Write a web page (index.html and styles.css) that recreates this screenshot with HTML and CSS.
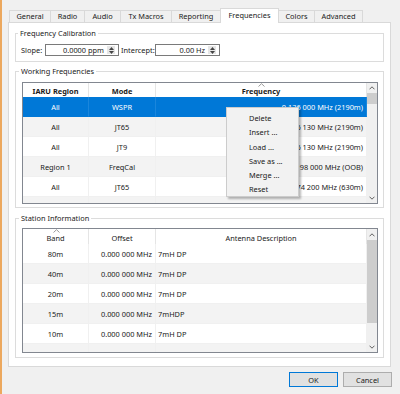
FILE: index.html
```html
<!DOCTYPE html>
<html>
<head>
<meta charset="utf-8">
<link rel="stylesheet" href="styles.css">
</head>
<body>
<div class="window">
  <div class="tabs">
    <div class="tab t-general">General</div>
    <div class="tab t-radio">Radio</div>
    <div class="tab t-audio">Audio</div>
    <div class="tab t-tx">Tx Macros</div>
    <div class="tab t-rep">Reporting</div>
    <div class="tab t-freq active">Frequencies</div>
    <div class="tab t-colors">Colors</div>
    <div class="tab t-adv">Advanced</div>
  </div>
  <div class="pane">
    <fieldset class="group calib">
      <legend>Frequency Calibration</legend>
      <div class="calib-row">
        <span class="lbl lbl-slope">Slope:</span>
        <div class="spin spin-slope">
          <span class="val">0.0000 ppm</span>
          <span class="spin-btns">
            <svg width="5" height="3" viewBox="0 0 5 3"><path d="M0 3L2.5 0L5 3Z" fill="#444"/></svg>
            <svg width="5" height="3" viewBox="0 0 5 3"><path d="M0 0L2.5 3L5 0Z" fill="#444"/></svg>
          </span>
        </div>
        <span class="lbl lbl-int">Intercept:</span>
        <div class="spin spin-int">
          <span class="val">0.00 Hz</span>
          <span class="spin-btns">
            <svg width="5" height="3" viewBox="0 0 5 3"><path d="M0 3L2.5 0L5 3Z" fill="#444"/></svg>
            <svg width="5" height="3" viewBox="0 0 5 3"><path d="M0 0L2.5 3L5 0Z" fill="#444"/></svg>
          </span>
        </div>
      </div>
    </fieldset>

    <fieldset class="group work">
      <legend>Working Frequencies</legend>
      <div class="table work-table">
        <div class="grid work-grid">
          <div class="row head bold">
            <div class="c center">IARU Region</div>
            <div class="c center">Mode</div>
            <div class="c center sorted"><svg class="sort" width="7" height="4" viewBox="0 0 7 4"><path d="M0.5 3.5L3.5 0.7L6.5 3.5" fill="none" stroke="#9a9a9a" stroke-width="1"/></svg>Frequency</div>
          </div>
          <div class="row sel">
            <div class="c center">All</div>
            <div class="c center">WSPR</div>
            <div class="c right">0.136 000 MHz (2190m)</div>
          </div>
          <div class="row alt">
            <div class="c center">All</div>
            <div class="c center">JT65</div>
            <div class="c right">0.136 130 MHz (2190m)</div>
          </div>
          <div class="row">
            <div class="c center">All</div>
            <div class="c center">JT9</div>
            <div class="c right">0.136 130 MHz (2190m)</div>
          </div>
          <div class="row alt">
            <div class="c center">Region 1</div>
            <div class="c center">FreqCal</div>
            <div class="c right">0.198 000 MHz (OOB)</div>
          </div>
          <div class="row">
            <div class="c center">All</div>
            <div class="c center">JT65</div>
            <div class="c right">0.474 200 MHz (630m)</div>
          </div>
          <div class="row alt">
            <div class="c center"></div>
            <div class="c center"></div>
            <div class="c right"></div>
          </div>
        </div>
        <div class="vscroll work-scroll">
          <div class="sb-btn"><svg width="6" height="4" viewBox="0 0 6 4"><path d="M0.5 3.3L3 0.8L5.5 3.3" fill="none" stroke="#606060" stroke-width="1"/></svg></div>
          <div class="thumb"></div>
          <div class="track"></div>
          <div class="sb-btn"><svg width="6" height="4" viewBox="0 0 6 4"><path d="M0.5 0.7L3 3.2L5.5 0.7" fill="none" stroke="#606060" stroke-width="1"/></svg></div>
        </div>
        <div class="menu">
          <div class="mi">Delete</div>
          <div class="mi">Insert ...</div>
          <div class="mi">Load ...</div>
          <div class="mi">Save as ...</div>
          <div class="mi">Merge ...</div>
          <div class="mi">Reset</div>
        </div>
      </div>
    </fieldset>

    <fieldset class="group station">
      <legend>Station Information</legend>
      <div class="table station-table">
        <div class="grid station-grid">
          <div class="row head">
            <div class="c center sorted"><svg class="sort" width="7" height="4" viewBox="0 0 7 4"><path d="M0.5 3.5L3.5 0.7L6.5 3.5" fill="none" stroke="#9a9a9a" stroke-width="1"/></svg>Band</div>
            <div class="c center">Offset</div>
            <div class="c center">Antenna Description</div>
          </div>
          <div class="row">
            <div class="c center">80m</div>
            <div class="c right">0.000 000 MHz</div>
            <div class="c left">7mH DP</div>
          </div>
          <div class="row alt">
            <div class="c center">40m</div>
            <div class="c right">0.000 000 MHz</div>
            <div class="c left">7mH DP</div>
          </div>
          <div class="row">
            <div class="c center">20m</div>
            <div class="c right">0.000 000 MHz</div>
            <div class="c left">7mH DP</div>
          </div>
          <div class="row alt">
            <div class="c center">15m</div>
            <div class="c right">0.000 000 MHz</div>
            <div class="c left">7mHDP</div>
          </div>
          <div class="row">
            <div class="c center">10m</div>
            <div class="c right">0.000 000 MHz</div>
            <div class="c left">7mH DP</div>
          </div>
          <div class="row alt">
            <div class="c center"></div>
            <div class="c right"></div>
            <div class="c left"></div>
          </div>
        </div>
        <div class="vscroll station-scroll">
          <div class="sb-btn"><svg width="6" height="4" viewBox="0 0 6 4"><path d="M0.5 3.3L3 0.8L5.5 3.3" fill="none" stroke="#606060" stroke-width="1"/></svg></div>
          <div class="thumb"></div>
          <div class="track"></div>
          <div class="sb-btn"><svg width="6" height="4" viewBox="0 0 6 4"><path d="M0.5 0.7L3 3.2L5.5 0.7" fill="none" stroke="#606060" stroke-width="1"/></svg></div>
        </div>
      </div>
    </fieldset>
  </div>
  <div class="buttons">
    <button class="btn ok">OK</button>
    <button class="btn">Cancel</button>
  </div>
</div>
</body>
</html>
```

FILE: styles.css
```css
* { box-sizing: border-box; }
html, body { margin: 0; padding: 0; }
body {
  background: #f0f0f0;
  font-family: "Noto Sans", "Liberation Sans", sans-serif;
  font-size: 7.4px;
  color: #1a1a1a;
  width: 400px;
  height: 394px;
  overflow: hidden;
}
.window {
  height: 394px;
  border-left: 2px solid #eca85e;
  padding: 10px 9px 0 6px;
  display: flex;
  flex-direction: column;
}

/* tabs */
.tabs {
  display: flex;
  align-items: flex-end;
  height: 12px;
  margin-left: 1px;
  position: relative;
  z-index: 1;
}
.tab {
  height: 12px;
  line-height: 11px;
  text-align: center;
  border: 1px solid #d9d9d9;
  border-right: none;
  border-bottom: none;
  background: #f0f0f0;
  white-space: nowrap;
}
.tab.t-adv { border-right: 1px solid #d9d9d9; }
.tab.active {
  height: 15px;
  margin-bottom: -1px;
  background: #fff;
  border-right: 1px solid #d9d9d9;
  line-height: 12px;
  padding-bottom: 2px;
}
.tab.active + .tab { border-left: none; }
.t-general { width: 41px; }
.t-radio { width: 34px; }
.t-audio { width: 36px; }
.t-tx { width: 51px; }
.t-rep { width: 49px; }
.t-freq { width: 59px; }
.t-colors { width: 35px; }
.t-adv { width: 49px; }

/* pane */
.pane {
  height: 345px;
  border: 1px solid #d9d9d9;
  background: #fff;
  padding: 4px 6px 0 6px;
}
.group {
  margin: 0;
  min-width: 0;
  border: 1px solid #dcdcdc;
}
.group legend {
  padding: 0 2px;
  margin-left: -3px;
  line-height: 12px;
  font-size: 7.4px;
}
.calib { padding: 5px 4px 5px 5px; }
.work { margin-top: 3px; padding: 5px 4px 3px 6px; }
.station { margin-top: 4px; padding: 4px 4px 4px 6px; }

/* calibration row */
.calib-row {
  display: flex;
  align-items: center;
  height: 12px;
}
.lbl-slope { width: 24px; }
.lbl-int { width: 34px; margin-left: 2px; }
.spin {
  height: 12px;
  border: 1px solid #7a7a7a;
  display: flex;
  align-items: center;
  justify-content: flex-end;
}
.spin-slope { width: 74px; }
.spin-int { width: 65px; }
.spin .val { padding-right: 3px; }
.spin-btns {
  width: 8px;
  height: 8px;
  margin-right: 3px;
  background: #e6e6e6;
  display: flex;
  flex-direction: column;
  align-items: center;
  justify-content: space-around;
}
.spin-btns svg { display: block; }

/* tables */
.table {
  width: 356px;
  border: 1px solid #828790;
  display: flex;
  position: relative;
  overflow: hidden;
  background: #fff;
}
.work-table { height: 122px; }
.station-table { height: 125px; }
.grid {
  flex: 1;
  display: grid;
  grid-template-columns: 66px 67px 1fr;
  grid-auto-rows: 20px;
  align-content: start;
}
.work-grid { grid-template-rows: 14px; }
.station-grid { grid-template-rows: 15px; }
.row { display: contents; }
.c {
  display: flex;
  align-items: center;
  padding: 0 3px;
  white-space: nowrap;
  overflow: hidden;
  border-right: 1px solid #f0f0f0;
  border-bottom: 1px solid #f0f0f0;
}
.c.center { justify-content: center; }
.c.right { justify-content: flex-end; }
.c.left { justify-content: flex-start; padding-left: 2px; }
.row.head .c {
  border-bottom: none;
  border-right: 1px solid #e5e5e5;
  background: #fff;
  padding-top: 1px;
}
.row.head.bold .c { font-weight: bold; }
.station-grid .row.head .c { padding-top: 2px; }
.row.alt .c { background: #f3f3f3; }
.row.sel .c { background: #0078d7; color: #fff; border-color: #0078d7; border-right-color: #1a86dc; }
.sorted { position: relative; }
.sort {
  position: absolute;
  left: 50%;
  top: 0;
  margin-left: -3px;
}

/* scrollbars */
.vscroll {
  width: 10px;
  background: #f0f0f0;
  display: flex;
  flex-direction: column;
}
.sb-btn {
  height: 10px;
  display: flex;
  align-items: center;
  justify-content: center;
}
.sb-btn svg { display: block; }
.thumb { background: #cdcdcd; }
.track { flex: 1; }
.work-scroll .thumb { height: 11px; }
.station-scroll .sb-btn:first-child { height: 11px; }
.station-scroll .thumb { height: 83px; }

/* context menu */
.menu {
  position: absolute;
  left: 203px;
  top: 24px;
  width: 73px;
  height: 90px;
  background: #f2f2f2;
  border: 1px solid #cccccc;
  box-shadow: 2px 2px 2px rgba(0, 0, 0, 0.28);
  padding: 3px 0 2px;
}
.mi {
  height: 14.3px;
  line-height: 14px;
  padding-left: 22px;
  color: #1a1a1a;
}

/* buttons */
.buttons {
  display: flex;
  justify-content: flex-end;
  gap: 5px;
  margin-top: 5px;
  margin-right: -1px;
}
.btn {
  width: 49px;
  height: 15px;
  border: 1px solid #adadad;
  background: #e1e1e1;
  font-family: inherit;
  font-size: 7.4px;
  color: #1a1a1a;
  padding: 0;
  margin: 0;
}
.btn.ok { border-color: #0078d7; }
```
